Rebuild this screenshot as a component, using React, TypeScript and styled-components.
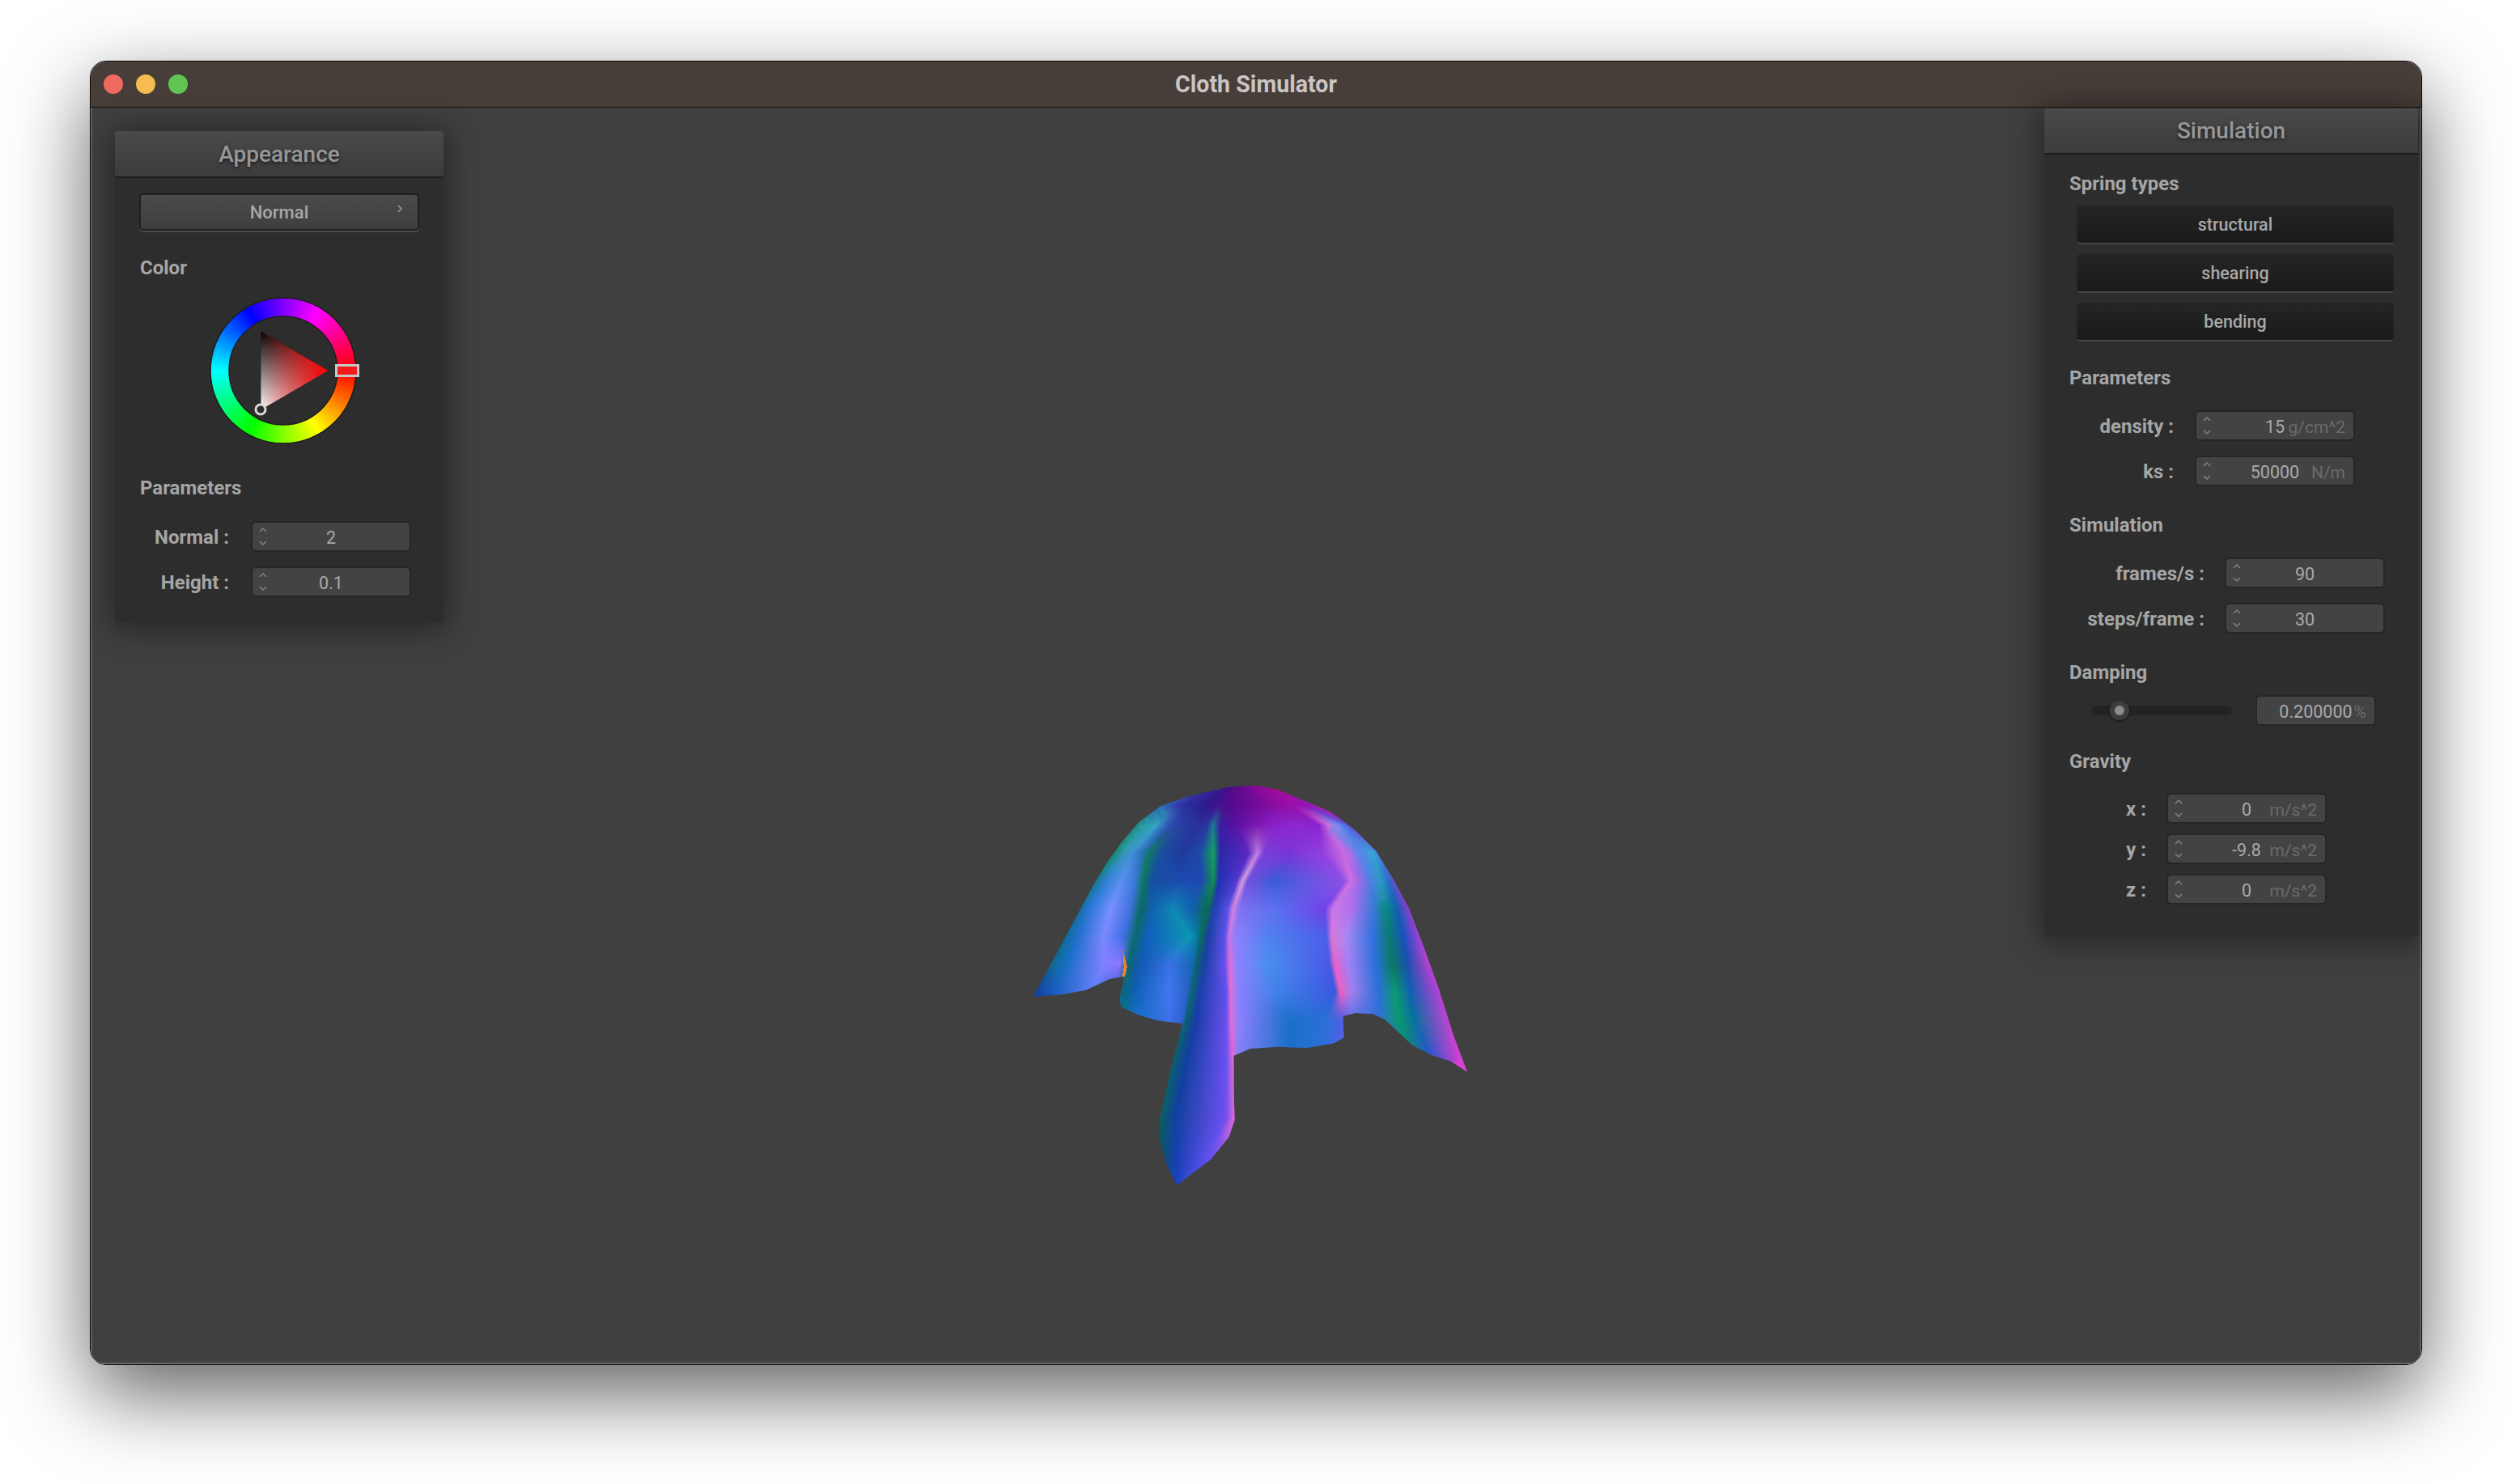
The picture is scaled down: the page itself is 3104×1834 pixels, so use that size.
import React, { useMemo } from 'react';
import styled, { createGlobalStyle } from 'styled-components';

const GlobalStyle = createGlobalStyle`
  html, body {
    margin: 0;
    padding: 0;
    background: #fff;
    font-family: Roboto, "Liberation Sans", sans-serif;
  }
`;

const Page = styled.div`
  width: 3104px;
  height: 1834px;
  box-sizing: border-box;
  padding: 75px 111px 0;
  overflow: hidden;
`;

const Window = styled.div`
  width: 2882px;
  height: 1612px;
  box-sizing: border-box;
  display: flex;
  flex-direction: column;
  border: 1px solid #0c0c0c;
  border-radius: 20px;
  overflow: hidden;
  box-shadow: 0 36px 100px rgba(0, 0, 0, 0.62);
`;

const TitleBar = styled.div`
  position: relative;
  flex: 0 0 57px;
  box-sizing: border-box;
  display: flex;
  align-items: center;
  justify-content: center;
  background: #473d39;
  border-bottom: 1px solid #141210;
  color: #c9c6c4;
  font-size: 28.6px;
  font-weight: 700;
`;

const Lights = styled.div`
  position: absolute;
  left: 16px;
  top: 16px;
  display: flex;
  gap: 16px;
`;

const Light = styled.span<{ $color: string }>`
  width: 24px;
  height: 24px;
  border-radius: 50%;
  background: ${(p) => p.$color};
`;

const Canvas = styled.div`
  position: relative;
  flex: 1;
  background: #404040;
  box-shadow: inset 2px 0 #5e5e5e, inset -2px 0 #5e5e5e, inset 0 -2px #666;
`;

const Panel = styled.div<{ $top: number; $left: number; $width: number; $height: number }>`
  position: absolute;
  top: ${(p) => p.$top}px;
  left: ${(p) => p.$left}px;
  width: ${(p) => p.$width}px;
  height: ${(p) => p.$height}px;
  background: #2d2d2d;
  border-radius: 4px;
  box-shadow: 0 4px 38px 6px rgba(0, 0, 0, 0.4);
`;

const PanelHeader = styled.div<{ $height: number }>`
  height: ${(p) => p.$height}px;
  box-sizing: border-box;
  display: flex;
  align-items: center;
  justify-content: center;
  background: linear-gradient(#4a4a4a, #3c3c3c);
  border-bottom: 2px solid #1c1c1c;
  border-radius: 4px 4px 0 0;
  color: #979797;
  font-size: 28px;
  font-weight: 500;
  text-shadow: 0 2px 4px rgba(0, 0, 0, 0.6);
`;

const SectionLabel = styled.div<{ $top: number; $left: number }>`
  margin: ${(p) => p.$top}px 0 0 ${(p) => p.$left}px;
  height: 28px;
  line-height: 28px;
  color: #a6a6a6;
  font-size: 24px;
  font-weight: 700;
`;

const Dropdown = styled.div`
  position: relative;
  margin: 19px 0 0 30px;
  width: 346px;
  height: 46px;
  box-sizing: border-box;
  display: flex;
  align-items: center;
  justify-content: center;
  background: linear-gradient(#4b4b4b, #3e3e3e);
  border: 2px solid #1f1f1f;
  border-radius: 5px;
  box-shadow: 0 2px #4a4a4a;
  color: #a8a8a8;
  font-size: 22px;
  font-weight: 500;
`;

const DropdownChevron = styled.svg`
  position: absolute;
  right: 18px;
  top: 11px;
  width: 8px;
  height: 12px;
`;

const Wheel = styled.div`
  position: relative;
  margin: 23px 0 0 118px;
  width: 180px;
  height: 180px;
`;

const WheelRing = styled.div`
  width: 180px;
  height: 180px;
  border-radius: 50%;
  background: conic-gradient(from 90deg, #f00, #ff0, #0f0, #0ff, #00f, #f0f, #f00);
  -webkit-mask: radial-gradient(circle, transparent 66.5px, #000 67.5px);
  mask: radial-gradient(circle, transparent 66.5px, #000 67.5px);
`;

const WheelOverlay = styled.svg`
  position: absolute;
  left: -10px;
  top: -10px;
  width: 200px;
  height: 200px;
`;

const Row = styled.div<{ $top: number; $labelWidth: number; $gap: number }>`
  margin-top: ${(p) => p.$top}px;
  display: grid;
  grid-template-columns: ${(p) => p.$labelWidth}px 198px;
  column-gap: ${(p) => p.$gap}px;
  align-items: center;
`;

const RowLabel = styled.div`
  padding-top: 1px;
  text-align: right;
  color: #a6a6a6;
  font-size: 24px;
  font-weight: 700;
  white-space: pre;
`;

const InputBox = styled.div<{ $width?: number }>`
  position: relative;
  width: ${(p) => p.$width ?? 198}px;
  height: 38px;
  box-sizing: border-box;
  display: flex;
  align-items: center;
  justify-content: center;
  background: #434343;
  border: 2px solid #262626;
  border-radius: 6px;
  color: #a9a9a9;
  font-size: 21.5px;
  padding-top: 3px;
`;

const Spinner = styled.svg`
  position: absolute;
  left: 8px;
  top: 5px;
  width: 10px;
  height: 24px;
`;

const Unit = styled.span`
  position: absolute;
  right: 10px;
  top: 50%;
  transform: translateY(-42%);
  color: #6b6b6b;
  font-size: 21px;
`;

const SpringList = styled.div`
  margin: 13px 0 0 40px;
  display: flex;
  flex-direction: column;
  gap: 12px;
`;

const SpringButton = styled.div`
  width: 392px;
  height: 48px;
  box-sizing: border-box;
  display: flex;
  align-items: center;
  justify-content: center;
  background: linear-gradient(#252525, #1a1a1a);
  border: 1px solid #232323;
  border-bottom: 2px solid #474747;
  border-radius: 5px;
  color: #a8a8a8;
  font-size: 21.5px;
  font-weight: 500;
`;

const SliderRow = styled.div`
  margin: 14px 0 0 58px;
  display: flex;
  align-items: center;
  gap: 29px;
`;

const SliderTrack = styled.div`
  position: relative;
  width: 174px;
  height: 12px;
  background: #232323;
  border-radius: 6px;
`;

const SliderKnob = styled.div`
  position: absolute;
  left: 23px;
  top: -6px;
  width: 24px;
  height: 24px;
  display: flex;
  align-items: center;
  justify-content: center;
  border-radius: 50%;
  background: #3d3d3d;
  box-shadow: 0 1px 3px rgba(0, 0, 0, 0.6);

  &::after {
    content: '';
    width: 12px;
    height: 12px;
    border-radius: 50%;
    background: #8c8c8c;
  }
`;

const ClothSvg = styled.svg`
  position: absolute;
  left: 1148px;
  top: 817px;
  width: 580px;
  height: 540px;
`;

const OUTLINE =
  'M45 818 L100 710 L170 570 L240 430 L290 340 L340 265 L400 190 L470 135 L560 100 L700 65 L790 60 L860 75 L950 115 L1040 155 L1120 220 L1190 295 L1250 400 L1300 500 L1350 640 L1400 790 L1450 960 L1495 1088 L1440 1050 L1370 1025 L1310 990 L1270 950 L1220 900 L1180 880 L1120 877 L1080 888 L1083 965 L1050 985 L960 1002 L860 998 L770 1005 L715 1030 L715 1150 L718 1260 L700 1320 L640 1400 L525 1495 L490 1420 L465 1320 L468 1260 L500 1100 L545 915 L470 905 L400 885 L340 855 L333 830 L350 745 L300 755 L220 795 L140 810 Z';

// colour cross sections of the cloth: each line holds the same 21 fold tracks as "x colour" pairs
const SECTIONS: [number, string][] = [
  [60, '640 3a1a90 650 3a1a90 660 3a1a90 670 3a1a90 680 3a1a90 690 420f8a 700 420f8a 710 4a0c88 720 5a0a88 730 5a0a88 740 620a8c 750 6a0a90 770 780a92 790 8a0a96 810 900a96 830 a00a90 850 a80a90 870 b00a90 890 b00a90 910 b00a90 930 b00a90'],
  [130, '480 2a6ac0 500 3050b8 530 303aa8 560 2a2a9c 580 2a2a98 600 2a2090 630 2f1a90 650 3a1490 670 450f8c 690 4e0c8c 730 5c0a90 770 6a0a96 810 7a0c9c 850 8a0ca0 900 980ea8 930 9a10b0 950 9412b4 970 8e14b8 985 a020b0 995 b020a8 1010 c01ca0'],
  [200, '395 1f8c80 425 2a9ab0 455 35a8c0 485 3068c0 505 2a4ab0 560 283aa0 600 2a2e9c 630 2a3aa0 645 1a7a90 670 3a1ca0 720 5a10a0 790 7a16b0 850 8a20c8 920 8c28d0 1000 8a24d0 1030 d070e0 1060 8090ee 1085 4a78e8 1100 6a48d8 1115 8a28c0 1125 9a20b0'],
  [300, '320 1a8a78 345 3098b0 375 4090d8 410 2a70b8 430 0f7a60 470 1a50a0 540 203a9c 600 1e48a8 648 12a060 670 2a28a8 765 5a28c4 795 c080e0 815 7a40d8 900 7a34d8 1010 9040e0 1080 c868e0 1110 a070e8 1140 5a88ea 1180 38a4d4 1195 4088dc 1210 6060d8'],
  [400, '245 0f7a80 290 3080d8 340 5a90f0 385 3a78d8 412 0a7a60 440 1450a0 530 1a4ab0 610 1e48b0 648 0f9050 665 2030b0 725 5038d0 745 d8a0e4 762 7050dc 850 3a5cd8 1085 9050e8 1108 d070e4 1135 9a68ea 1175 4a80e0 1205 20a0b8 1235 2f68d0 1270 a030c8'],
  [500, '190 0c6a8a 235 2a78d8 305 7a90ff 370 4070e0 405 0a6a60 440 1060b0 510 1088b4 575 1060b0 628 0a6a50 650 2040b0 695 5a50e8 713 d480e0 735 8070f0 860 5a70f0 1020 7040e8 1045 c878e8 1110 b070f0 1180 3a78d8 1222 0a8a80 1260 1060b0 1305 9a38d0'],
  [600, '140 0a6a88 195 2070d0 280 7a88ff 345 4070e8 385 0a6a70 430 1060c0 570 0a98b0 590 0a80a8 606 0a6a60 628 1a40a0 685 5c50ea 700 c878e0 720 9080ff 830 5080f0 1025 4a60e8 1042 d878d8 1090 a888f4 1180 3070e0 1235 0a7a70 1285 1a50c0 1342 b040d8'],
  [700, '100 0a6a88 160 1a70c8 280 8080ff 335 8c74ff 360 0a6a70 400 1058b0 500 3a70e8 575 1468b8 592 0a6070 620 1a40a8 685 6a50ee 702 e070d8 725 9080ff 825 4a90f0 1035 4a58e8 1052 e862c8 1100 a080f8 1190 2a70d8 1245 0a7a60 1295 1a50b0 1372 c040d0'],
  [800, '40 143a98 120 1a60c0 240 5a80f8 320 3060d0 345 0a6878 385 0f60b8 500 4078f0 560 2a60c8 572 0a6a70 600 1a40a8 690 6050f0 705 e070d8 730 8a80ff 860 4080e8 1055 3a58e0 1072 f060c0 1110 a080f0 1200 2a70d8 1255 0a9a70 1305 1060b0 1405 b840d8'],
  [900, '100 1a4aa8 150 1a4aa8 220 1a4aa8 320 0a7090 340 0a7090 400 1a70d0 500 4070e8 545 2a60d0 556 0a6070 590 1a3aa8 690 6a50f0 706 e070d8 730 9080ff 900 1a70c8 1020 2a70d8 1078 5060e8 1110 6070e8 1200 3070d8 1265 0a9a70 1320 0a70a0 1440 c840d8'],
  [1050, '300 0a6070 350 0a6070 400 0a6070 450 0a6070 470 0a6070 480 0a6070 490 0a6070 500 0a6070 510 0a6070 555 1040a0 690 6a50f0 713 dc68dc 730 8080f8 900 1a70c8 1000 2a70d8 1080 5060e8 1150 5060e8 1250 1a70b0 1320 0a7a80 1380 3050d8 1475 d840d0'],
  [1250, '400 0a6060 410 0a6060 420 0a6060 430 0a6060 440 0a6060 450 0a6060 455 0a6060 460 0a6060 470 0a6060 520 1040a0 690 7050f0 717 e068d8 730 e068d8 740 e068d8 750 e068d8 760 e068d8 770 e068d8 780 e068d8 790 e068d8 800 e068d8 810 e068d8'],
  [1400, '400 0a5070 410 0a5070 420 0a5070 430 0a5070 440 0a5070 450 0a5070 455 0a5070 460 0a5070 475 0a5070 530 1a40b8 620 5a50ea 660 7050f0 730 7050f0 740 7050f0 750 7050f0 760 7050f0 770 7050f0 780 7050f0 790 7050f0 800 7050f0 810 7050f0'],
  [1500, '400 1c40c0 410 1c40c0 420 1c40c0 430 1c40c0 440 1c40c0 450 1c40c0 455 1c40c0 460 1c40c0 520 1c40c0 525 1c40c0 530 2048c8 540 2048c8 730 2048c8 740 2048c8 750 2048c8 760 2048c8 770 2048c8 780 2048c8 790 2048c8 800 2048c8 810 2048c8'],
];

const STRIP = 4;

const parseSection = (line: string) => {
  const parts = line.split(' ');
  const stops: { x: number; rgb: number[] }[] = [];
  for (let i = 0; i < parts.length; i += 2) {
    const hex = parts[i + 1];
    stops.push({
      x: Number(parts[i]),
      rgb: [0, 2, 4].map((n) => parseInt(hex.slice(n, n + 2), 16)),
    });
  }
  return stops;
};

const buildStrips = () => {
  const parsed = SECTIONS.map(([y, line]) => ({ y, stops: parseSection(line) }));
  const strips: { y: number; stops: { offset: number; color: string }[] }[] = [];
  for (let y = 60; y < 1500; y += STRIP) {
    const next = parsed.findIndex((s) => s.y > y);
    const b = parsed[next];
    const a = parsed[next - 1];
    const t = (y - a.y) / (b.y - a.y);
    strips.push({
      y,
      stops: a.stops.map((stop, i) => {
        const other = b.stops[i];
        const mix = stop.rgb.map((c, n) => Math.round(c + (other.rgb[n] - c) * t));
        return {
          offset: (stop.x + (other.x - stop.x) * t) / 1568,
          color: `rgb(${mix.join(',')})`,
        };
      }),
    });
  }
  return strips;
};

const Cloth = () => {
  const strips = useMemo(buildStrips, []);
  return (
    <ClothSvg viewBox="0 0 1568 1568" preserveAspectRatio="none">
      <defs>
        <clipPath id="cloth-clip">
          <path d={OUTLINE} shapeRendering="crispEdges" />
        </clipPath>
        <filter id="soft" x="-30%" y="-30%" width="160%" height="160%">
          <feGaussianBlur stdDeviation="6" />
        </filter>
        {strips.map((s) => (
          <linearGradient key={s.y} id={`strip-${s.y}`} gradientUnits="userSpaceOnUse" x1="0" y1="0" x2="1568" y2="0">
            {s.stops.map((stop, i) => (
              <stop key={i} offset={stop.offset} stopColor={stop.color} />
            ))}
          </linearGradient>
        ))}
      </defs>
      <g clipPath="url(#cloth-clip)">
        {strips.map((s) => (
          <rect key={s.y} x="0" y={s.y} width="1568" height={STRIP + 2} fill={`url(#strip-${s.y})`} />
        ))}
        <path d="M350 290 L385 240 L430 190 L500 140" fill="none" stroke="#3aa8b8" strokeWidth="30" strokeDasharray="18 12" opacity="0.45" filter="url(#soft)" />
        <path d="M1040 215 L1120 280 L1180 360 L1215 480" fill="none" stroke="#4a8ce8" strokeWidth="34" strokeDasharray="20 10" opacity="0.45" filter="url(#soft)" />
      </g>
      <path d="M344 648 L352 680 L359 712 L352 745 L343 745 L348 710 Z" fill="#f08232" shapeRendering="crispEdges" />
    </ClothSvg>
  );
};

const WheelMarks = () => (
  <WheelOverlay viewBox="0 0 200 200">
    <defs>
      <linearGradient id="tri-shade" x1="0" y1="0" x2="0" y2="1">
        <stop offset="0" stopColor="#000" />
        <stop offset="1" stopColor="#fff" />
      </linearGradient>
      <linearGradient id="tri-red" gradientUnits="userSpaceOnUse" x1="72" y1="0" x2="156" y2="0">
        <stop offset="0" stopColor="#f00" stopOpacity="0" />
        <stop offset="1" stopColor="#f00" />
      </linearGradient>
    </defs>
    <circle cx="100" cy="100" r="90" fill="none" stroke="#1e1e1e" strokeWidth="1.5" />
    <circle cx="100" cy="100" r="67" fill="none" stroke="#1e1e1e" strokeWidth="1.5" />
    <path d="M72 51 L156 100 L72 149 Z" fill="url(#tri-shade)" />
    <path d="M72 51 L156 100 L72 149 Z" fill="url(#tri-red)" stroke="#3a2020" strokeWidth="0.8" />
    <rect x="165.5" y="93.5" width="27" height="13" fill="#f21a1a" stroke="#c8c8c8" strokeWidth="3" />
    <circle cx="72" cy="148" r="6" fill="#2d2d2d" stroke="#d8d8d8" strokeWidth="3" />
  </WheelOverlay>
);

const Spin = () => (
  <Spinner viewBox="0 0 10 24" fill="none" stroke="#858585" strokeWidth="1.4">
    <polyline points="1,6 5,2 9,6" />
    <polyline points="1,18 5,22 9,18" />
  </Spinner>
);

interface FieldProps {
  value: string;
  unit?: string;
}

const Field: React.FC<FieldProps> = ({ value, unit }) => (
  <InputBox>
    <Spin />
    {value}
    {unit && <Unit>{unit}</Unit>}
  </InputBox>
);

const App: React.FC = () => (
  <Page>
    <GlobalStyle />
    <Window>
      <TitleBar>
        <Lights>
          <Light $color="#ee6a5f" />
          <Light $color="#f5bd4f" />
          <Light $color="#61c554" />
        </Lights>
        Cloth Simulator
      </TitleBar>
      <Canvas>
        <Cloth />

        <Panel $top={29} $left={30} $width={406} $height={607}>
          <PanelHeader $height={58}>Appearance</PanelHeader>
          <Dropdown>
            Normal
            <DropdownChevron viewBox="0 0 8 12" fill="none" stroke="#999" strokeWidth="1.6">
              <polyline points="2,2 6,6 2,10" />
            </DropdownChevron>
          </Dropdown>
          <SectionLabel $top={32} $left={31}>Color</SectionLabel>
          <Wheel>
            <WheelRing />
            <WheelMarks />
          </Wheel>
          <SectionLabel $top={41} $left={31}>Parameters</SectionLabel>
          <Row $top={27} $labelWidth={141} $gap={27}>
            <RowLabel>Normal :</RowLabel>
            <Field value="2" />
          </Row>
          <Row $top={18} $labelWidth={141} $gap={27}>
            <RowLabel>Height :</RowLabel>
            <Field value="0.1" />
          </Row>
        </Panel>

        <Panel $top={1} $left={2414} $width={462} $height={1023}>
          <PanelHeader $height={57}>Simulation</PanelHeader>
          <SectionLabel $top={22} $left={31}>Spring types</SectionLabel>
          <SpringList>
            <SpringButton>structural</SpringButton>
            <SpringButton>shearing</SpringButton>
            <SpringButton>bending</SpringButton>
          </SpringList>
          <SectionLabel $top={31} $left={31}>Parameters</SectionLabel>
          <Row $top={26} $labelWidth={160} $gap={26}>
            <RowLabel>density :</RowLabel>
            <Field value="15" unit="g/cm^2" />
          </Row>
          <Row $top={18} $labelWidth={160} $gap={26}>
            <RowLabel>ks :</RowLabel>
            <Field value="50000" unit="N/m" />
          </Row>
          <SectionLabel $top={34} $left={31}>Simulation</SectionLabel>
          <Row $top={26} $labelWidth={198} $gap={25}>
            <RowLabel>frames/s :</RowLabel>
            <Field value="90" />
          </Row>
          <Row $top={18} $labelWidth={198} $gap={25}>
            <RowLabel>steps/frame :</RowLabel>
            <Field value="30" />
          </Row>
          <SectionLabel $top={34} $left={31}>Damping</SectionLabel>
          <SliderRow>
            <SliderTrack>
              <SliderKnob />
            </SliderTrack>
            <InputBox $width={149}>
              0.200000
              <Unit>%</Unit>
            </InputBox>
          </SliderRow>
          <SectionLabel $top={30} $left={31}>Gravity</SectionLabel>
          <Row $top={25} $labelWidth={126} $gap={25}>
            <RowLabel>x :</RowLabel>
            <Field value="0" unit="m/s^2" />
          </Row>
          <Row $top={12} $labelWidth={126} $gap={25}>
            <RowLabel>y :</RowLabel>
            <Field value="-9.8" unit="m/s^2" />
          </Row>
          <Row $top={12} $labelWidth={126} $gap={25}>
            <RowLabel>z :</RowLabel>
            <Field value="0" unit="m/s^2" />
          </Row>
        </Panel>
      </Canvas>
    </Window>
  </Page>
);

export default App;
